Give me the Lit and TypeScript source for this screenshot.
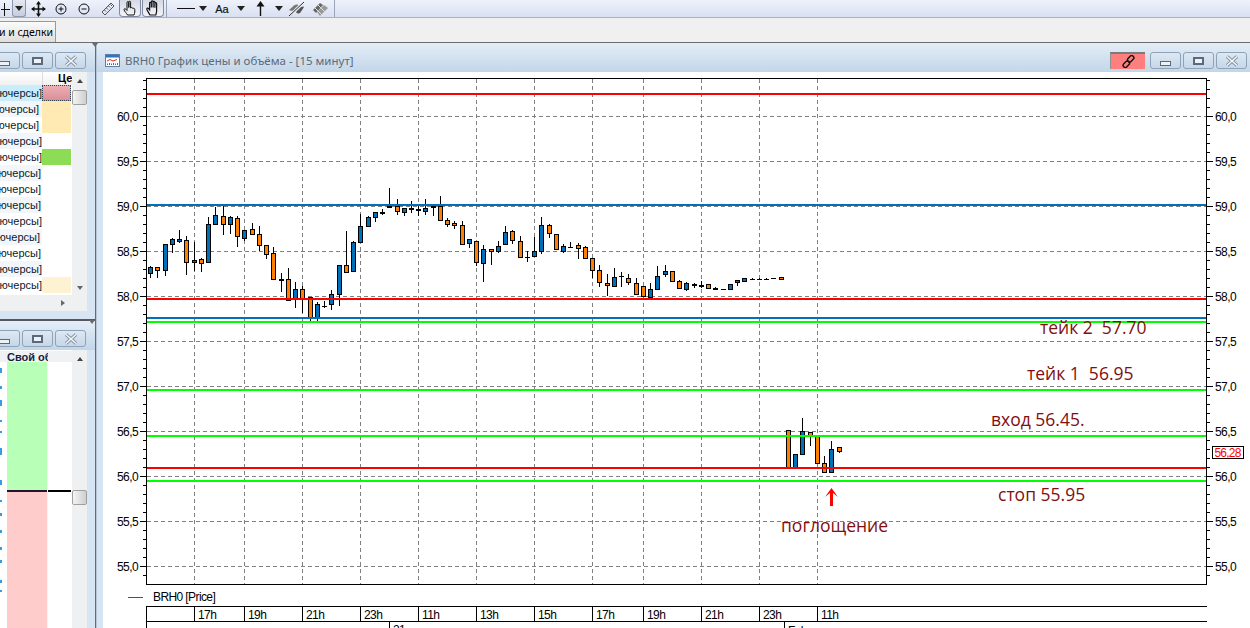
import { LitElement, html, css, svg } from "lit";
import { customElement } from "lit/decorators.js";

type C = [number, number, number, number, number, string];
const B = "#0070b8", O = "#ff8000";
// [x, wickTop, bodyTop, bodyBottom, wickBottom, colour] measured in 3x crops
const A: C[] = [
  [16,258,262,280,293,B],[37,262,262,271,293,O],[61,193,193,271,287,B],[82,174,178,193,218,B],[103,150,178,184,190,B],
  [124,168,181,247,285,O],[148,186,241,247,273,B],[169,235,238,250,276,O],[190,111,133,247,247,B],[211,80,106,133,133,B],
  [235,78,109,133,165,O],[256,109,112,133,162,B],[277,108,115,169,200,O],[298,150,151,175,183,B],[322,129,148,163,166,O],
  [343,138,163,196,212,O],[364,196,196,223,236,O],[385,202,220,298,298,O],[409,278,298,301,335,"#000"],[430,264,298,360,361,O],
  [451,307,328,355,383,B],[472,318,328,358,398,O],[496,350,352,412,423,O],[517,365,373,412,423,B],[538,362,377,378,383,"#000"],
  [559,331,343,373,389,B],[583,256,256,343,378,B],[604,153,256,277,278,O],[625,184,187,274,275,B],[646,102,139,187,187,B],
  [670,108,112,139,141,B],[691,97,97,112,127,B],[712,86,97,98,106,"#000"],[733,24,78,82,83,B],[757,57,78,92,106,O],
  [778,85,85,95,108,B],[799,63,85,86,100,"#000"],[820,72,88,89,108,"#000"],[841,57,85,92,106,B],[865,72,78,82,108,B],
  [886,48,78,121,124,O],[907,115,121,133,140,O],[928,124,130,136,147,O],[952,124,136,193,193,O],[973,178,178,190,204,B],
];
const D: C[] = [
  [19,124,124,187,197,O],[40,136,148,190,245,B],[64,148,148,154,194,O],[85,124,139,154,158,B],[106,79,97,133,133,B],
  [127,91,94,121,133,O],[151,109,124,172,172,O],[172,154,170,171,185,"#000"],[193,111,154,169,172,B],[214,52,76,154,163,B],
  [238,73,76,100,115,O],[259,103,103,148,151,O],[280,133,139,154,160,B],[301,127,141,142,145,"#000"],[325,130,136,145,178,O],
  [346,139,142,175,175,O],[367,175,175,211,235,O],[388,196,211,247,260,O],[412,223,250,256,287,O],[433,205,232,257,258,B],
  [454,217,227,228,260,"#000"],[475,223,235,247,254,O],[499,235,250,283,284,O],[520,259,259,289,290,O],[541,250,268,292,301,B],
  [562,199,229,268,268,B],[586,196,214,223,232,B],[607,212,214,244,245,O],[628,241,244,265,265,O],[649,247,250,268,274,B],
  [673,250,253,254,265,"#000"],[694,244,256,257,265,"#000"],[715,253,253,265,265,O],[736,262,265,267,269,"#000"],[760,266,267,268,268,"#000"],
  [781,253,253,268,268,B],[802,241,241,247,257,B],[823,235,235,244,244,B],[847,235,236,238,238,"#000"],[868,235,236,238,238,"#000"],
  [889,235,236,236,238,"#000"],[910,235,235,235,235,"#000"],[934,232,232,238,238,O],
];
const E: C[] = [
  [85,91,91,200,200,O],[106,163,163,200,200,B],[127,55,94,163,163,B],[151,97,97,106,137,O],
  [172,109,109,190,190,O],[193,169,190,217,220,O],[214,124,148,217,217,B],[238,142,142,154,158,O],
];
const conv = (s: C[], ox: number, oy: number) =>
  s.map(([x, a, b, c, d, k]) => ({
    x: Math.floor(ox + x / 3) + 0.5,
    wt: oy + a / 3, bt: Math.round(oy + b / 3) + 0.5, bb: Math.round(oy + c / 3) + 0.5, wb: oy + d / 3, k,
  }));
const candles = [...conv(A, 145, 180), ...conv(D, 470, 200), ...conv(E, 760, 400)];

const ticks = [194.5, 244.5, 302.5, 360.5, 418.5, 476.5, 534.5, 592.5, 643.5, 701.5, 759.5, 817.5];
const hours = ["17h", "19h", "21h", "23h", "11h", "13h", "15h", "17h", "19h", "21h", "23h", "11h"];
const prices = ["60,0", "59,5", "59,0", "58,5", "58,0", "57,5", "57,0", "56,5", "56,0", "55,5", "55,0"];
const py = (i: number) => 116.5 + 45 * i;
const minor: number[] = [];
for (let y = 80.5; y < 584; y += 9) minor.push(y);

const lines: [number, string][] = [
  [93.5, "#ff0000"], [205, "#0070b8"], [298.5, "#ff0000"], [317.5, "#0070b8"], [322, "#00ff00"],
  [390, "#00ff00"], [436, "#00ff00"], [468, "#ff0000"], [481, "#00ff00"],
];
const notes: [string, number, number][] = [
  ["тейк 2  57.70", 1040, 334], ["тейк 1  56.95", 1027, 380], ["вход 56.45.", 991, 426],
  ["стоп 55.95", 998, 501], ["поглощение", 781, 532],
];

const rows = [
  { pad: 0, t: "#c8eefe", c: "#e3a0a6" }, { pad: 3, t: "#f2f5f9", c: "#feeab2" }, { pad: 3, t: "#fff", c: "#feeab2" },
  { pad: 0, t: "#f2f5f9", c: "#fff" }, { pad: 0, t: "#fff", c: "#8cdc55" }, { pad: 1, t: "#f2f5f9", c: "#fff" },
  { pad: 1, t: "#fff", c: "#fff" }, { pad: 1, t: "#f2f5f9", c: "#fff" }, { pad: 0, t: "#fff", c: "#fff" },
  { pad: 2, t: "#f2f5f9", c: "#fff" }, { pad: 1, t: "#fff", c: "#fff" }, { pad: 0, t: "#f2f5f9", c: "#fff" },
  { pad: 0, t: "#fff", c: "#fdf2d2" },
];
const dots: [number, number][] = [
  [368, 5], [386, 3], [400, 6], [420, 2], [431, 2], [448, 7], [480, 5], [500, 2], [513, 3], [530, 3], [547, 3], [560, 3], [580, 3], [590, 2],
];

const tri = html`<svg width="8" height="5" viewBox="0 0 8 5"><path d="M0 0H8L4 5Z" fill="#222"/></svg>`;
const ic = (w: number, body: unknown) =>
  html`<svg width=${w} height="16" viewBox="0 0 ${w} 16" fill="none" stroke="#111" stroke-width="1">${body}</svg>`;
const icons = {
  plus: ic(10, svg`<path d="M0 8.5H9M3.5 2V15"/>`),
  move: ic(15, svg`<path d="M7.5 1.5V14.5M1 8H14" stroke-width="1.6"/><path d="M7.5 0L10 3.5H5ZM7.5 16L5 12.5H10ZM0 8L3.5 5.5V10.5ZM15 8L11.5 5.5V10.5Z" fill="#111" stroke="none"/>`),
  zin: ic(12, svg`<circle cx="6" cy="8" r="5"/><path d="M3.5 8H8.5M6 5.5V10.5"/>`),
  zout: ic(12, svg`<circle cx="6" cy="8" r="5"/><path d="M3.5 8H8.5"/>`),
  ruler: ic(14, svg`<path d="M1 11L10 2L13 5L4 14Z" stroke="#555"/><path d="M3.5 9L5 10.5M5.5 7L7 8.5M7.5 5L9 6.5M9.5 3.5L11 5" stroke="#555"/>`),
  point: ic(14, svg`<path d="M4.5 15C3.5 13 1.5 11.5 1 9.8C.8 8.8 2 8.3 2.8 9.2L4 10.5V2.5C4 1.2 5.8 1.2 5.8 2.5V7.5V2.2C5.8 1 7.6 1 7.6 2.2V8C8.5 7.2 9.6 7.4 9.8 8.5C10.8 8 11.8 8.4 11.8 9.5V12C11.8 13.2 11.3 14 11 15Z"/>`),
  hand: ic(14, svg`<path d="M4 15C3 13 1.2 10.8 .8 9.2C.6 8.2 1.8 7.6 2.6 8.6L3.6 9.8V3.2C3.6 2 5.3 2 5.3 3.2V7.5V1.8C5.3.6 7.1.6 7.1 1.8V7.5V2.2C7.1 1 8.9 1 8.9 2.2V7.8V3.6C8.9 2.4 10.6 2.4 10.6 3.6V11C10.6 12.6 10 14 9.8 15Z" stroke-width="1.2"/>`),
  up: ic(11, svg`<path d="M5.5 15V3" stroke-width="1.4"/><path d="M5.5 0L9.5 5.5H1.5Z" fill="#111" stroke="none"/>`),
  pen: ic(17, svg`<path d="M1 15L16 1" stroke="#333"/><path d="M1 9L6 4.5C8 3 10 3.5 10.5 4L5 9.5C3.5 10 2 9.8 1 9Z" fill="#777" stroke="none"/><path d="M8 11L13 6C15 5 16 5.5 16 6L12.5 11.5C11 13 9.5 13 8 11Z" fill="#555" stroke="none"/>`),
  layers: ic(17, svg`<path d="M1 9L8 2L11 4L4 12Z" fill="#666" stroke="none"/><path d="M5 11L12 4L16 7L8 15Z" fill="#999" stroke="none"/><path d="M3 7L10 14M6 4L13 11" stroke="#ddd"/>`),
};
const minIcon = html`<span class="ig min"></span>`;
const maxIcon = html`<span class="ig max"></span>`;
const xIcon = html`<svg width="14" height="12" viewBox="0 0 14 12"><path d="M2 1.5L12 10.5M12 1.5L2 10.5" stroke="#8090a0" stroke-width="3.4"/><path d="M2 1.5L12 10.5M12 1.5L2 10.5" stroke="#f4f7fa" stroke-width="1.6"/></svg>`;
const chain = html`<svg width="13" height="13" viewBox="0 0 13 13" fill="none" stroke="#111" stroke-width="1.4"><rect x="6.6" y="0.2" width="4.2" height="7" rx="1.8" transform="rotate(45 8.7 3.7)"/><rect x="2.2" y="5.8" width="4.2" height="7" rx="1.8" transform="rotate(45 4.3 9.3)"/></svg>`;
const winIcon = html`<svg width="15" height="13" viewBox="0 0 15 13"><rect x=".5" y=".5" width="14" height="12" fill="#fff" stroke="#5b7fa6"/><rect x="1" y="1" width="13" height="2.5" fill="#2f74c0"/><path d="M2 7L5 5.5L8 7L12 5.5" stroke="#e03030" fill="none"/><path d="M2.5 11V9.5M4.5 11V9M6.5 11V9.5M8.5 11V9M10.5 11V9.5M12.5 11V9" stroke="#2f74c0"/></svg>`;

@customElement("app-root")
export class AppRoot extends LitElement {
  static styles = css`
    :host { display: block; width: 1250px; height: 628px; overflow: hidden; background: #f0f0f0;
      font-family: "Liberation Sans", Arial, sans-serif; font-size: 11px; color: #000; }
    .page { display: grid; grid-template-rows: 18px 24px 1fr; height: 628px; }
    .toolbar { display: flex; align-items: center; height: 17px; border-bottom: 1px solid #a9b2c4;
      background: linear-gradient(#eef2fb, #d9e0f1); overflow: hidden; }
    .slot { display: flex; align-items: center; justify-content: center; height: 17px; flex: none; }
    .dd { width: 14px; height: 17px; border: 1px solid #8d98ad; border-top: 0; border-radius: 0 0 3px 3px; margin-right: 0;
      background: linear-gradient(#e4e8f2, #c6cde0); box-sizing: border-box; }
    .pressed { width: 22px; height: 17px; box-sizing: border-box; border: 1px solid #7f8aa0; border-top: 0; border-radius: 0 0 4px 4px;
      background: linear-gradient(#d5d9e4, #f2f4f9); margin-right: 1px; }
    .sep { width: 1px; height: 17px; background: #9aa3b8; margin: 0 2px 0 0; flex: none; }
    .sep.first { margin-left: 1px; }
    .w8 { width: 8px; }
    .line { width: 26px; justify-content: flex-end; margin-right: 4px; }
    .w30 { width: 30px; }
    .w27 { width: 27px; }
    .w20 { width: 20px; }
    .w26 { width: 26px; }
    .w25 { width: 25px; }
    .w22 { width: 22px; }
    .w15 { width: 15px; }
    .w11 { width: 11px; }
    .sep.last { margin-left: 4px; }
    .aa { font-size: 11px; color: #111; -webkit-text-stroke: .2px #111; }
    .tabs { background: #f0f0f0; padding-top: 3px; box-sizing: border-box; display: flex; height: 24px; }
    .tab { width: 56px; height: 21px; box-sizing: border-box; background: linear-gradient(#fbfbfb, #dedede); border: 1px solid #9a9a9a;
      border-left: 0; border-bottom: 0; display: flex; justify-content: flex-end; align-items: center; white-space: nowrap; overflow: hidden;
      font-family: "Noto Sans", sans-serif; font-size: 10.5px; padding-right: 2px; }
    .work { display: grid; grid-template-columns: 95px 2px 1fr; min-height: 0; background: #d6e4f3; border-top: 1px solid #6d6d6d; }
    .split { background: #6a6a6a; border-right: 1px solid #b5c5d6; box-sizing: border-box; position: relative; }
    .split::before { content: ""; position: absolute; left: -3px; top: 0; border: 3px solid transparent; border-bottom: 0; border-top: 4px solid #6a6a6a; }
    .left { display: grid; grid-template-rows: 276px 2px 1fr; min-height: 0; }
    .hsplit { background: #55595e; position: relative; }
    .hsplit::after { content: ""; position: absolute; right: 0; top: 1px; border: 3px solid transparent; border-bottom: 0; border-top: 4px solid #6a6a6a; }
    .lp { display: flex; flex-direction: column; min-height: 0; overflow: hidden; background: #d6e4f3; }
    .bar { height: 29px; flex: none; display: flex; align-items: center; justify-content: flex-end; gap: 2px; padding: 6px 9px 0 0;
      background: linear-gradient(#e4eef8, #c3d6e8); box-sizing: border-box; }
    .btn { width: 31px; height: 17px; box-sizing: border-box; border: 1px solid #8ea2b8; border-radius: 3px; display: flex; align-items: center; justify-content: center;
      background: linear-gradient(#dde8f3, #c6d7e8); flex: none; }
    .ig { display: block; box-sizing: border-box; background: #eef2f6; border: 1px solid #5a6a7c; }
    .min { width: 11px; height: 5px; margin-top: 5px; }
    .max { width: 11px; height: 8px; border-width: 2px; }
    .lbody { flex: 1; display: grid; grid-template-columns: 72px 15px; min-height: 0; width: 87px; }
    .ltable { background: #fff; overflow: hidden; position: relative; }
    .lhead { height: 13px; background: linear-gradient(#fff, #f1f1f1); display: grid; grid-template-columns: 42px 30px; font-weight: 700; line-height: 13px; }
    .lhead span:last-child { padding-left: 15px; overflow: hidden; white-space: nowrap; box-sizing: border-box; border-left: 1px solid #ddd; }
    .row { display: grid; grid-template-columns: 42px 29px; height: 16px; }
    .cell { display: flex; justify-content: flex-end; overflow: hidden; white-space: nowrap; line-height: 16px; color: #0c1a2c; box-sizing: border-box; }
    .first .swatch { background: linear-gradient(#eeb0b5, #d98d95); outline: 1px dotted #345; outline-offset: -1px; }
    .scroll { background: #eef0f2; position: relative; display: flex; flex-direction: column; align-items: center; }
    .arrow-up { width: 0; height: 0; border: 3.5px solid transparent; border-top: 0; border-bottom: 4px solid #444; margin-top: 7px; }
    .arrow-dn { width: 0; height: 0; border: 3.5px solid transparent; border-bottom: 0; border-top: 4px solid #666; margin-top: auto; margin-bottom: 5px; }
    .thumb { position: absolute; left: 0; width: 15px; height: 15px; box-sizing: border-box; border: 1px solid #a0a0a0; border-radius: 2px;
      background: linear-gradient(90deg, #f4f4f4, #cfcfcf); }
    .hbar { height: 16px; flex: none; width: 87px; background: #eef0f2; display: flex; align-items: center; justify-content: flex-end; padding-right: 22px; box-sizing: border-box; margin-bottom: 8px; }
    .arrow-r { width: 0; height: 0; border: 3.5px solid transparent; border-right: 0; border-left: 4px solid #666; }
    .lower { display: grid; grid-template-columns: 7px 40px 1px 24px; height: 100%; position: relative; }
    .lhead2 { height: 11px; display: grid; grid-template-columns: 7px 41px 24px; background: #f0f1f3; font-weight: 700; line-height: 12px; color: #15233a; }
    .lhead2 span { overflow: hidden; white-space: nowrap; }
    .ltable2 { background: #fff; overflow: hidden; padding-top: 1px; }
    .dcol { position: relative; background: #fff; }
    .dot { position: absolute; left: 0; width: 2px; background: #3b9be0; }
    .gcol { display: flex; flex-direction: column; }
    .green { height: 128px; background: #b8ffb8; flex: none; }
    .pink { flex: 1; background: #ffcccc; border-top: 2px solid #2a1030; }
    .vgap { background: #f4f4f4; }
    .wcol .blk { height: 128px; }
    .wcol .ln { height: 2px; background: #000; width: 23px; }
    .right { display: flex; flex-direction: column; min-width: 0; min-height: 0; }
    .titlebar { height: 29px; flex: none; display: flex; align-items: center; padding: 6px 3px 0 8px; background: linear-gradient(#e3edf7, #c3d6e8); box-sizing: border-box; }
    .title { font-family: "Noto Sans", sans-serif; font-size: 11.5px; color: #5c6a78; margin-left: 5px; flex: 1; white-space: nowrap; }
    .link { width: 35px; height: 17px; background: #ff7f7f; border-top: 2px solid #7b7b7b; border-left: 1px solid #909090; box-sizing: border-box; margin-right: 5px; display: flex; align-items: center; justify-content: center; }
    .wbtns { display: flex; gap: 2px; }
    .body { flex: 1; min-height: 0; display: flex; background: #d6e4f3; padding-left: 6px; }
    .plot { display: block; background: #fff; }
    .plot text { font-family: "Liberation Sans", Arial, sans-serif; font-size: 12px; letter-spacing: -.6px; fill: #000; }
    .plot text.note { font-family: "Open Sans", sans-serif; font-size: 17.5px; letter-spacing: 0; fill: #7f1010; white-space: pre; }
    .plot text.tag { fill: #ff0000; letter-spacing: -.8px; }
  `;

  private plot() {
    return html`<svg class="plot" width="1147" height="556" viewBox="103 72 1147 556" shape-rendering="crispEdges">
      ${prices.map((_, i) => svg`<line x1="147" x2="1206" y1=${py(i)} y2=${py(i)} stroke="#808080" stroke-dasharray="4 3"/>`)}
      ${ticks.map((x) => svg`<line x1=${x} x2=${x} y1="79" y2="584" stroke="#808080" stroke-dasharray="4 3"/>`)}
      ${candles.map((c) => svg`
        <line x1=${c.x} x2=${c.x} y1=${c.wt} y2=${c.wb} stroke="#000"/>
        ${c.k === "#000"
          ? svg`<rect x=${c.x - 2.5} y=${c.bt - 0.5} width="5" height=${Math.max(1, c.bb - c.bt + 1)} fill="#000"/>`
          : svg`<rect x=${c.x - 2} y=${c.bt} width="4" height=${Math.max(1, c.bb - c.bt)} fill=${c.k} stroke="#000"/>`}`)}
      ${lines.map(([y, k]) => svg`<rect x="147" y=${Math.round(y - 1)} width="1059" height="2" fill=${k}/>`)}
      <rect x="146" y="78" width="1061" height="1" fill="#000"/>
      <rect x="146" y="584" width="1061" height="1" fill="#000"/>
      <rect x="146" y="78" width="1" height="507" fill="#000"/>
      <rect x="1206" y="78" width="1" height="507" fill="#000"/>
      ${minor.map((y) => svg`<line x1="143" x2="146" y1=${y} y2=${y} stroke="#000"/><line x1="1207" x2="1210" y1=${y} y2=${y} stroke="#000"/>`)}
      ${prices.map((p, i) => svg`
        <line x1="140" x2="146" y1=${py(i)} y2=${py(i)} stroke="#000"/>
        <line x1="1207" x2="1213" y1=${py(i)} y2=${py(i)} stroke="#000"/>
        <text x="138" y=${py(i) + 4.5} text-anchor="end">${p}</text>
        <text x="1215" y=${py(i) + 4.5}>${p}</text>`)}
      <rect x="1212.5" y="446.5" width="31" height="12" fill="#fff" stroke="#000"/>
      <text class="tag" x="1214.5" y="457">56,28</text>
      ${notes.map(([t, x, y]) => svg`<text class="note" x=${x} y=${y}>${t}</text>`)}
      <path d="M830 506H833V493L838 497L831.5 488L825 497L830 493Z" fill="#ff0000" shape-rendering="auto"/>
      <rect x="128" y="597" width="15" height="1" fill="#d81818"/>
      <text x="153" y="601">BRH0 [Price]</text>
      <rect x="146" y="606" width="1061" height="1" fill="#000"/>
      <rect x="146" y="621" width="1061" height="1" fill="#000"/>
      <rect x="146" y="606" width="1" height="22" fill="#000"/>
      ${ticks.map((x, i) => svg`<line x1=${x} x2=${x} y1="606" y2="621" stroke="#000"/><text x=${x + 3.5} y="619">${hours[i]}</text>`)}
      <line x1="389.5" x2="389.5" y1="621" y2="628" stroke="#000"/><text x="393" y="634">21</text>
      <line x1="784.5" x2="784.5" y1="621" y2="628" stroke="#000"/><text x="788" y="635">Feb</text>
    </svg>`;
  }

  private buttons() {
    return html`<div class="btn">${minIcon}</div><div class="btn">${maxIcon}</div><div class="btn">${xIcon}</div>`;
  }

  render() {
    return html`<div class="page">
      <div class="toolbar">
        <div class="slot w11">${icons.plus}</div>
        <div class="slot w15"><div class="dd slot">${tri}</div></div>
        <div class="slot w25">${icons.move}</div>
        <div class="slot w20">${icons.zin}</div>
        <div class="slot w26">${icons.zout}</div>
        <div class="slot w22">${icons.ruler}</div>
        <div class="slot pressed">${icons.point}</div>
        <div class="slot pressed">${icons.hand}</div>
        <div class="sep first"></div>
        <div class="slot line"><svg width="18" height="3"><rect y="1" width="18" height="1" fill="#111"/></svg></div>
        <div class="slot w8">${tri}</div>
        <div class="slot w30"><span class="aa">Aa</span></div>
        <div class="slot w8">${tri}</div>
        <div class="slot w30">${icons.up}</div>
        <div class="slot w8">${tri}</div>
        <div class="slot w27">${icons.pen}</div>
        <div class="slot w20">${icons.layers}</div>
        <div class="sep last"></div>
      </div>
      <div class="tabs"><div class="tab">и и сделки</div></div>
      <div class="work">
        <div class="left">
          <div class="lp">
            <div class="bar">${this.buttons()}</div>
            <div class="lbody">
              <div class="ltable">
                <div class="lhead"><span></span><span>Цена</span></div>
                ${rows.map((r, i) => html`<div class="row ${i === 0 ? "first" : ""}">
                  <div class="cell" style="background:${r.t};padding-right:${r.pad}px">фьючерсы]</div>
                  <div class="swatch" style="background-color:${r.c}"></div>
                </div>`)}
              </div>
              <div class="scroll"><div class="arrow-up"></div><div class="thumb" style="top:18px"></div><div class="arrow-dn"></div></div>
            </div>
            <div class="hbar"><div class="arrow-r"></div></div>
          </div>
          <div class="hsplit"></div>
          <div class="lp">
            <div class="bar">${this.buttons()}</div>
            <div class="lbody">
              <div class="ltable2">
                <div class="lhead2"><span></span><span>Свой объём</span><span></span></div>
                <div class="lower">
                  <div class="dcol">${dots.map(([y, h]) => html`<div class="dot" style="top:${y - 362}px;height:${h}px"></div>`)}</div>
                  <div class="gcol"><div class="green"></div><div class="pink"></div></div>
                  <div class="vgap"></div>
                  <div class="wcol"><div class="blk"></div><div class="ln"></div></div>
                </div>
              </div>
              <div class="scroll"><div class="arrow-up"></div><div class="thumb" style="top:140px"></div></div>
            </div>
          </div>
        </div>
        <div class="split"></div>
        <div class="right">
          <div class="titlebar">
            ${winIcon}
            <div class="title">BRH0 График цены и объёма - [15 минут]</div>
            <div class="link">${chain}</div>
            <div class="wbtns">${this.buttons()}</div>
          </div>
          <div class="body">${this.plot()}</div>
        </div>
      </div>
    </div>`;
  }
}
